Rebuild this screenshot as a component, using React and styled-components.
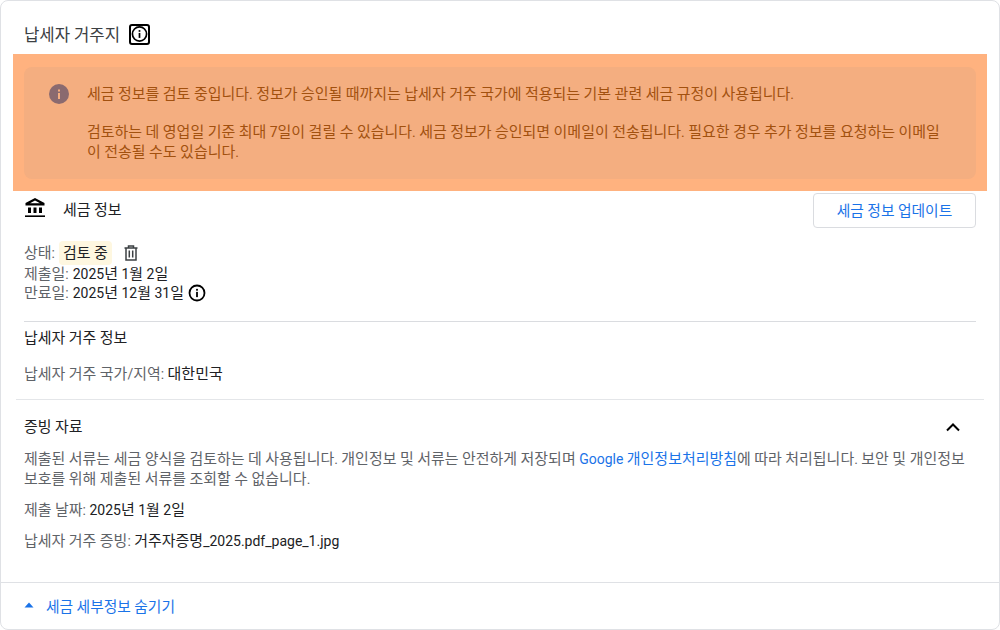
import styled, { createGlobalStyle } from "styled-components";

const GlobalStyle = createGlobalStyle`
  html, body {
    margin: 0;
    padding: 0;
    background: #fff;
  }
  body {
    font-family: Roboto, "Noto Sans CJK KR", sans-serif;
    font-size: 14px;
    color: #202124;
  }
`;

const Card = styled.div`
  width: 1000px;
  height: 630px;
  box-sizing: border-box;
  border: 1px solid #dfe1e5;
  border-radius: 8px;
  display: flex;
  flex-direction: column;
  overflow: hidden;
`;

const Body = styled.div`
  flex: 1;
  padding: 0 23px;
`;

const Title = styled.div`
  height: 53px;
  display: flex;
  align-items: center;
  gap: 9px;
  font-size: 15.6px;
  color: #3c4043;
  padding-top: 13px;
  box-sizing: border-box;
`;

const FocusIcon = styled.span`
  display: inline-flex;
  align-items: center;
  justify-content: center;
  width: 17px;
  height: 17px;
  border: 2px solid #000;
  border-radius: 3px;
`;

const Highlight = styled.div`
  margin: 0 -11px;
  padding: 13px 11px 12px;
  background: #ffb27f;
`;

const Notice = styled.div`
  display: flex;
  gap: 18px;
  padding: 17px 24px 17px 25px;
  background: #f4ae80;
  border-radius: 8px;
  color: #a2510f;
  line-height: 20px;
`;

const NoticeIcon = styled.svg`
  width: 20px;
  height: 20px;
  flex: none;
`;

const NoticeText = styled.div`
  p {
    margin: 0 0 18px;
  }
  p:last-child {
    margin: 0;
  }
`;

const TaxHeader = styled.div`
  display: flex;
  align-items: flex-start;
  justify-content: space-between;
  padding-top: 2px;
`;

const TaxLabel = styled.div`
  display: flex;
  align-items: center;
  gap: 17px;
  height: 30px;
  color: #202124;
`;

const OutlineButton = styled.button`
  width: 163px;
  height: 35px;
  padding: 0 0 3px;
  background: #fff;
  border: 1px solid #dadce0;
  border-radius: 4px;
  color: #1a73e8;
  font: inherit;
  font-size: 13.8px;
`;

const Facts = styled.div`
  margin-top: 14px;
  line-height: 20px;
`;

const Fact = styled.div`
  display: flex;
  align-items: center;
  height: ${(p) => p.$height || 19}px;
  gap: 4px;
`;

const Key = styled.span`
  color: #5f6368;
`;

const Status = styled.span`
  background: #fef7e0;
  border-radius: 4px;
  padding: 0 4px;
  line-height: 24px;
`;

const Spacer = styled.span`
  width: 4px;
`;

const Section = styled.div`
  border-top: 1px solid #dadce0;
  margin-top: ${(p) => p.$top}px;
`;

const Heading = styled.div`
  padding-top: ${(p) => p.$pad ?? 6}px;
  line-height: 20px;
`;

const Line = styled.div`
  line-height: 20px;
  margin-top: ${(p) => p.$top}px;
`;

const WideRule = styled.div`
  border-top: 1px solid #e4e6e9;
  margin: 15px -8px 0;
`;

const Evidence = styled.div`
  padding-top: 17px;
`;

const EvidenceHead = styled.div`
  display: flex;
  align-items: center;
  justify-content: space-between;
  height: 20px;
  padding-right: 15px;
`;

const Description = styled.div`
  margin-top: 12px;
  line-height: 20px;
  color: #5f6368;
  a {
    color: #1a73e8;
    text-decoration: none;
  }
`;

const Footer = styled.div`
  height: 47px;
  box-sizing: border-box;
  padding: 0 0 2px 23px;
  border-top: 1px solid #dfe1e5;
  display: flex;
  align-items: center;
  gap: 12px;
  color: #1a73e8;
  font-size: 13.8px;
`;

const Hangul = styled.span`
  font-size: 1.07em;
`;

// hangul in the picture runs wider than the latin beside it
const Ko = ({ children }) =>
  children
    .split(/([가-힣]+)/)
    .map((part, i) => (i % 2 ? <Hangul key={i}>{part}</Hangul> : part));

const Info = ({ size = 18 }) => (
  <svg width={size} height={size} viewBox="0 0 24 24" fill="none">
    <circle cx="12" cy="12" r="10" stroke="#000" strokeWidth="2.4" />
    <rect x="10.8" y="10.5" width="2.4" height="7" fill="#000" />
    <rect x="10.8" y="6.5" width="2.4" height="2.4" fill="#000" />
  </svg>
);

const Bank = () => (
  <svg width="22" height="22" viewBox="0 0 22 22" fill="#000">
    <path fillRule="evenodd" d="M11 1 1.5 6v2.5h19V6L11 1Zm0 2.4L16 6.3H6L11 3.4Z" />
    <rect x="4" y="10.5" width="3" height="5.5" />
    <rect x="9.5" y="10.5" width="3" height="5.5" />
    <rect x="15" y="10.5" width="3" height="5.5" />
    <rect x="1" y="18.4" width="20" height="1.6" />
  </svg>
);

const Trash = () => (
  <svg width="14" height="16" viewBox="0 0 14 16" fill="none" stroke="#3c4043" strokeWidth="1.5">
    <path d="M0.5 3h13M4.5 3V1h5v2M2 3v12h10V3M5.3 5.5v7M8.7 5.5v7" />
  </svg>
);

export default function App() {
  return (
    <>
      <GlobalStyle />
      <Card>
        <Body>
          <Title>
            <span><Ko>납세자 거주지</Ko></span>
            <FocusIcon>
              <Info />
            </FocusIcon>
          </Title>
          <Highlight>
            <Notice>
              <NoticeIcon viewBox="0 0 20 20">
                <circle cx="10" cy="10" r="10" fill="#8a6a6f" />
                <rect x="9" y="9" width="2" height="6" fill="#f4ae80" />
                <rect x="9" y="5.5" width="2" height="2" fill="#f4ae80" />
              </NoticeIcon>
              <NoticeText>
                <p><Ko>세금 정보를 검토 중입니다. 정보가 승인될 때까지는 납세자 거주 국가에 적용되는 기본 관련 세금 규정이 사용됩니다.</Ko></p>
                <p>
                  <Ko>검토하는 데 영업일 기준 최대 7일이 걸릴 수 있습니다. 세금 정보가 승인되면 이메일이 전송됩니다. 필요한 경우 추가 정보를 요청하는 이메일</Ko>
                  <br />
                  <Ko>이 전송될 수도 있습니다.</Ko>
                </p>
              </NoticeText>
            </Notice>
          </Highlight>
          <TaxHeader>
            <TaxLabel>
              <Bank />
              <span><Ko>세금 정보</Ko></span>
            </TaxLabel>
            <OutlineButton><Ko>세금 정보 업데이트</Ko></OutlineButton>
          </TaxHeader>
          <Facts>
            <Fact $height={22}>
              <Key><Ko>상태:</Ko></Key>
              <Status><Ko>검토 중</Ko></Status>
              <Spacer />
              <Trash />
            </Fact>
            <Fact>
              <Key><Ko>제출일:</Ko></Key>
              <span><Ko>2025년 1월 2일</Ko></span>
            </Fact>
            <Fact>
              <Key><Ko>만료일:</Ko></Key>
              <span><Ko>2025년 12월 31일</Ko></span>
              <Info />
            </Fact>
          </Facts>
          <Section $top={19}>
            <Heading><Ko>납세자 거주 정보</Ko></Heading>
            <Line $top={16}>
              <Key><Ko>납세자 거주 국가/지역:</Ko></Key> <Ko>대한민국</Ko>
            </Line>
          </Section>
          <WideRule />
          <Evidence>
            <EvidenceHead>
              <Heading $pad={0}><Ko>증빙 자료</Ko></Heading>
              <svg width="16" height="10" viewBox="0 0 16 10" fill="none" stroke="#000" strokeWidth="2">
                <path d="M2 8.5 8 2.5l6 6" />
              </svg>
            </EvidenceHead>
            <Description>
              <Ko>제출된 서류는 세금 양식을 검토하는 데 사용됩니다. 개인정보 및 서류는 안전하게 저장되며 </Ko>
              <a href="#p"><Ko>Google 개인정보처리방침</Ko></a>
              <Ko>에 따라 처리됩니다. 보안 및 개인정보</Ko>
              <br />
              <Ko>보호를 위해 제출된 서류를 조회할 수 없습니다.</Ko>
            </Description>
            <Line $top={11}>
              <Key><Ko>제출 날짜:</Ko></Key> <Ko>2025년 1월 2일</Ko>
            </Line>
            <Line $top={11}>
              <Key><Ko>납세자 거주 증빙:</Ko></Key> <Ko>거주자증명_2025.pdf_page_1.jpg</Ko>
            </Line>
          </Evidence>
        </Body>
        <Footer>
          <svg width="10" height="6" viewBox="0 0 10 6" fill="#1a73e8">
            <path d="M5 0.5 9.5 5.5H0.5Z" />
          </svg>
          <span><Ko>세금 세부정보 숨기기</Ko></span>
        </Footer>
      </Card>
    </>
  );
}
